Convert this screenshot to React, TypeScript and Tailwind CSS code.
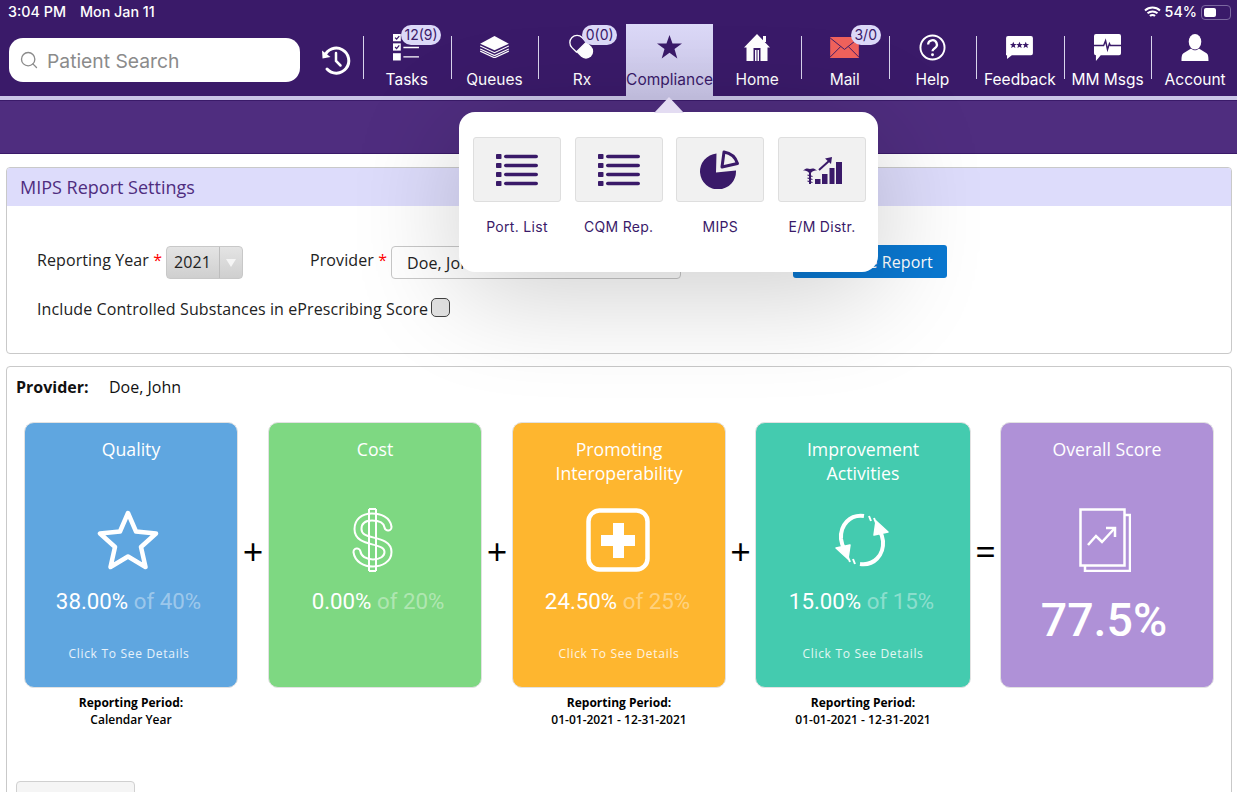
import type { ReactNode } from "react";
import { Search } from "lucide-react";

const PURPLE = "#3a1a69";

function HistoryIcon() {
  return (
    <svg width="32" height="32" viewBox="0 0 32 32" fill="none" stroke="white" strokeWidth="3" strokeLinecap="round">
      <path d="M4.5 12.5A12.5 12.5 0 1 1 7 25" />
      <path d="M2 6.5l0.5 8 8-1.5" fill="white" stroke="none" />
      <path d="M16 9v8l4.5 4.5" strokeWidth="2.5" />
    </svg>
  );
}

function TasksIcon() {
  return (
    <svg width="27" height="27" viewBox="0 0 26 26">
      <rect x="0" y="0" width="7.500" height="7" fill="white" />
      <rect x="0" y="9" width="7.500" height="7" fill="white" />
      <rect x="0" y="18.500" width="7.500" height="7" fill="white" />
      <path d="M2 3.500l1.500 1.500 2.500-3M2 12.500l1.500 1.500 2.500-3" stroke={PURPLE} strokeWidth="1.200" fill="none" />
      <path d="M10 13h15M10 22h15" stroke="white" strokeWidth="1.300" />
    </svg>
  );
}

function QueuesIcon() {
  return (
    <svg width="29" height="22" viewBox="0 0 30 23" fill="none" stroke="white" strokeWidth="1.200">
      <path d="M15 0L30 8 15 15 0 8Z" fill="white" stroke="none" />
      <path d="M0 10.500l15 7 15-7M0 13.500l15 7 15-7M0 15.800l15 7 15-7" />
    </svg>
  );
}

function PillIcon() {
  return (
    <svg width="27" height="28" viewBox="0 0 30 30">
      <g transform="rotate(-45 15 15)">
        <path d="M7 15V8a8 8 0 0 1 16 0v7Z" fill="none" stroke="white" strokeWidth="1.500" />
        <path d="M7 15h16v7a8 8 0 0 1-16 0Z" fill="white" />
      </g>
    </svg>
  );
}

function StarIcon() {
  return (
    <svg width="25" height="24" viewBox="0 0 24 23" fill={PURPLE}>
      <path d="M12 0l2.900 8.200H24l-7.200 5.300 2.700 9-7.500-5.400-7.500 5.400 2.700-9L0 8.200h9.100Z" />
    </svg>
  );
}

function HomeIcon() {
  return (
    <svg width="26" height="27" viewBox="0 0 26 27" fill="white">
      <path d="M13 0L26 13.500h-2.500V27H16.500V14h-7v13H2.500V13.500H0Z" />
      <rect x="19" y="2" width="3" height="6" />
      <path d="M11 16h1.500v11H11zM13.500 16H15v11h-1.500z" />
    </svg>
  );
}

function MailIcon() {
  return (
    <svg width="29" height="21" viewBox="0 0 30 22">
      <rect width="30" height="22" fill="#f0625c" />
      <path d="M0 1l15 12L30 1M0 21l11-11M30 21L19 10" stroke={PURPLE} strokeWidth="1" fill="none" />
    </svg>
  );
}

function HelpIcon() {
  return (
    <svg width="27" height="27" viewBox="0 0 28 28" fill="none" stroke="white">
      <circle cx="14" cy="14" r="12.500" strokeWidth="2" />
      <path d="M9.500 11a4.500 4.500 0 1 1 6.800 3.800c-1.600 1-2.300 1.700-2.300 3.200" strokeWidth="2.400" />
      <circle cx="14" cy="21.500" r="1.500" fill="white" stroke="none" />
    </svg>
  );
}

function FeedbackIcon() {
  return (
    <svg width="27" height="23" viewBox="0 0 28 24">
      <path d="M2 0h24a2 2 0 0 1 2 2v16a2 2 0 0 1-2 2H6l-5 4V20a1 1 0 0 1-1-2V2a2 2 0 0 1 2-2Z" fill="white" />
      <g fill={PURPLE}>
        <path d="M7.500 6l1 2.400h2.500l-2 1.600.7 2.500-2.200-1.400-2.200 1.400.7-2.500-2-1.600H6.500Z" />
        <path d="M14 6l1 2.400h2.500l-2 1.600.7 2.500L14 11.100l-2.200 1.400.7-2.500-2-1.600H13Z" />
        <path d="M20.500 6l1 2.400H24l-2 1.600.7 2.500-2.200-1.400-2.200 1.400.7-2.500-2-1.600h2.500Z" />
      </g>
    </svg>
  );
}

function MsgsIcon() {
  return (
    <svg width="27" height="27" viewBox="0 0 28 28">
      <path d="M2 0h24a2 2 0 0 1 2 2v18a2 2 0 0 1-2 2H7l-5 6v-6a2 2 0 0 1-2-2V2a2 2 0 0 1 2-2Z" fill="white" />
      <path d="M0 12h10l2-5 2 9 2-6 1 2h11" stroke={PURPLE} strokeWidth="1.500" fill="none" />
    </svg>
  );
}

function AccountIcon() {
  return (
    <svg width="28" height="27" viewBox="0 0 28 28" fill="white">
      <ellipse cx="14" cy="8" rx="6.500" ry="8" />
      <path d="M10 15l-8 5c-1.500 1-2 3-2 8h28c0-5-.5-7-2-8l-8-5c-2 2.500-6 2.500-8 0Z" />
    </svg>
  );
}

function ListIcon() {
  return (
    <svg width="42" height="32" viewBox="0 0 42 32" fill={PURPLE}>
      {[0, 9, 18, 27].map((y) => (
        <g key={y}>
          <rect x="0" y={y} width="5.500" height="5" rx="0.800" />
          <rect x="8" y={y + 0.700} width="34" height="3.600" rx="1.800" />
        </g>
      ))}
    </svg>
  );
}

function PieIcon() {
  return (
    <svg width="40" height="39" viewBox="0 0 40 39">
      <path d="M16.500 3.500A18 18 0 1 0 36 20.500L16 22.500Z" fill={PURPLE} />
      <path d="M24 2A17 17 0 0 1 37.500 13.500L22 17Z" fill="none" stroke={PURPLE} strokeWidth="3" strokeLinejoin="round" />
    </svg>
  );
}

function EmIcon() {
  return (
    <svg width="39" height="28" viewBox="0 0 39 28" fill={PURPLE}>
      <rect x="12" y="23" width="5.500" height="5" />
      <rect x="19" y="18" width="5.500" height="10" />
      <rect x="26.500" y="12" width="5" height="16" />
      <rect x="33" y="6" width="6" height="22" />
      <path d="M16 14l10-9" stroke={PURPLE} strokeWidth="2" />
      <path d="M22 2.500L29 1l-1 7Z" />
      <path d="M0 14.500c2.500-2.500 5-2.500 7-1.500 2-1 4.500-1 7 1.500-2.500 0-4.500.5-5.500 2h-3c-1-1.500-3-2-5.500-2Z" />
      <rect x="6" y="14" width="2" height="14" />
      <path d="M4.500 19l5 1.500M4.500 22l5 1.500M4.500 25l5 1.500" stroke={PURPLE} strokeWidth="1.100" />
    </svg>
  );
}

function StarOutline() {
  return (
    <svg width="62" height="60" viewBox="0 0 62 60" fill="none" stroke="white" strokeWidth="4.500" strokeLinejoin="round">
      <path d="M31 3l8 18.500 20 2-15 13.500 4.500 20L31 46.500 13.500 57 18 37 3 23.500l20-2Z" />
    </svg>
  );
}

function DollarIcon() {
  const s = "M36 19C35 12 28 9 20 9C11 9 6 14 6 21C6 29 13 31 21 33C29 35 36 37 36 44C36 51 29 55 21 55C13 55 6 51 5 44";
  return (
    <svg width="42" height="64" viewBox="0 0 42 64" fill="none">
      <path d={s} stroke="white" strokeWidth="9" strokeLinecap="round" />
      <path d={s} stroke="#7ed882" strokeWidth="5" strokeLinecap="round" />
      <path d="M17 1h7M17 63h7M17 1v62M24 1v62" stroke="white" strokeWidth="2" />
    </svg>
  );
}

function PlusBox() {
  return (
    <svg width="64" height="64" viewBox="0 0 64 64" fill="none">
      <rect x="2.500" y="2.500" width="59" height="59" rx="11" stroke="white" strokeWidth="4.500" />
      <path d="M27 15h11v12h11v11H38v12H27V38H15V27h12Z" fill="white" />
    </svg>
  );
}

function CycleIcon() {
  return (
    <svg width="60" height="56" viewBox="0 0 60 56" fill="none" stroke="white" strokeWidth="4">
      <path d="M32 4C18 2 8 13 9 27c.5 5 2 8 4 11" />
      <path d="M28 52c14 2 24-9 23-23-.5-5-2-8-4-11" />
      <path d="M4 36l14-3-2 14ZM56 20l-14 3 2-14Z" fill="white" stroke="white" strokeWidth="1.500" strokeLinejoin="round" />
      <path d="M37 4l2 5M42 6l2 5M23 52l-2-5M18 50l-2-5" strokeWidth="2" />
    </svg>
  );
}

function ReportIcon() {
  return (
    <svg width="52" height="64" viewBox="0 0 52 64" fill="none" stroke="white" strokeWidth="2.500">
      <rect x="1.500" y="1.500" width="44" height="56" />
      <path d="M46 7h5v56H6v-5" />
      <path d="M9 37l8-9 6 6 12-13" />
      <path d="M27 20h9v9" />
    </svg>
  );
}

type NavItem = { label: string; icon: ReactNode; badge?: string; badgeLeft?: string; active?: boolean; divider?: boolean };

const NAV: NavItem[] = [
  { label: "Tasks", icon: <TasksIcon />, badge: "12(9)", badgeLeft: "left-[38px]", divider: true },
  { label: "Queues", icon: <QueuesIcon />, divider: true },
  { label: "Rx", icon: <PillIcon />, badge: "0(0)", badgeLeft: "left-[44px]", divider: true },
  { label: "Compliance", icon: <StarIcon />, active: true },
  { label: "Home", icon: <HomeIcon /> },
  { label: "Mail", icon: <MailIcon />, badge: "3/0", badgeLeft: "left-[50px]", divider: true },
  { label: "Help", icon: <HelpIcon />, divider: true },
  { label: "Feedback", icon: <FeedbackIcon />, divider: true },
  { label: "MM Msgs", icon: <MsgsIcon />, divider: true },
  { label: "Account", icon: <AccountIcon />, divider: true },
];

const REPORTS = [
  { label: "Port. List", icon: <ListIcon /> },
  { label: "CQM Rep.", icon: <ListIcon /> },
  { label: "MIPS", icon: <PieIcon /> },
  { label: "E/M Distr.", icon: <EmIcon /> },
];

type Score = {
  title: string[];
  icon: ReactNode;
  iconClass: string;
  score: string;
  total: string;
  scoreClass: string;
  color: string;
  width: string;
  detailsClass?: string;
  details?: boolean;
  period?: string;
};

const SCORES: Score[] = [
  { title: ["Quality"], icon: <StarOutline />, iconClass: "mr-[7px]", score: "38.00%", total: "of 40%", scoreClass: "mr-[5px]", detailsClass: "mr-[4px]", color: "bg-[#5fa6e0]", width: "w-[214px]", details: true, period: "Calendar Year" },
  { title: ["Cost"], icon: <DollarIcon />, iconClass: "mr-[4px]", score: "0.00%", total: "of 20%", scoreClass: "ml-[6px]", color: "bg-[#7ed882]", width: "w-[214px]" },
  { title: ["Promoting", "Interoperability"], icon: <PlusBox />, iconClass: "mr-[3px]", score: "24.50%", total: "of 25%", scoreClass: "mr-[3px]", color: "bg-[#feb62f]", width: "w-[214px]", details: true, period: "01-01-2021 - 12-31-2021" },
  { title: ["Improvement", "Activities"], icon: <CycleIcon />, iconClass: "mr-[2px]", score: "15.00%", total: "of 15%", scoreClass: "mr-[3px]", color: "bg-[#44cbaf]", width: "w-[216px]", details: true, period: "01-01-2021 - 12-31-2021" },
];

function ScoreCard({ item }: { item: Score }) {
  return (
    <div className={`shrink-0 ${item.width}`}>
      <div className={`relative h-[266px] rounded-[10px] border border-[#e2e2e2] text-white flex flex-col items-center ${item.color}`}>
        <div className="h-[85px] pt-[14px] text-center text-[17.700px] leading-[24px]">
          {item.title.map((t) => (
            <div key={t}>{t}</div>
          ))}
        </div>
        <div className={`h-[64px] flex items-center justify-center ${item.iconClass}`}>{item.icon}</div>
        <div className={`mt-[14px] font-['Roboto',sans-serif] text-[22.300px] leading-[30px] whitespace-nowrap ${item.scoreClass}`}>
          {item.score} <span className="text-white/40">{item.total}</span>
        </div>
        {item.details && (
          <div className={`mt-[29px] text-[12px] leading-[18px] tracking-[0.700px] text-white/85 ${item.detailsClass ?? ""}`}>
            Click To See Details
          </div>
        )}
      </div>
      {item.period && (
        <div className="mt-[6px] text-center text-[12px] leading-[17px] text-black">
          <div className="font-bold">Reporting Period:</div>
          <div className="font-semibold">{item.period}</div>
        </div>
      )}
    </div>
  );
}

function Operator({ sign, width }: { sign: string; width: string }) {
  return (
    <div className={`shrink-0 h-[266px] pb-[6px] flex items-center justify-center text-[36px] text-black ${width}`}>
      {sign}
    </div>
  );
}

export default function App() {
  return (
    <div className="relative w-[1237px] h-[792px] overflow-hidden bg-white font-['Open_Sans',sans-serif]">
      {/* top bar */}
      <div className="bg-[#3a1a69] h-[96px] font-['Inter',sans-serif]">
        <div className="h-[24px] flex items-center justify-between pl-[8px] pr-[6px] text-white text-[14.300px] font-medium">
          <div className="flex gap-[14px]">
            <span>3:04 PM</span>
            <span>Mon Jan 11</span>
          </div>
          <div className="flex items-center gap-[4px]">
            <svg width="17" height="13" viewBox="0 0 17 13" fill="none" stroke="white" strokeWidth="2">
              <path d="M1 4.500a11 11 0 0 1 15 0M3.500 7.300a7.500 7.500 0 0 1 10 0M6 10a3.500 3.500 0 0 1 5 0" />
            </svg>
            <span>54%</span>
            <div className="w-[30px] h-[15px] rounded-[4px] border border-[#7c68a0] p-[2px]">
              <div className="w-[52%] h-full rounded-[2px] bg-white" />
            </div>
          </div>
        </div>
        <div className="flex h-[72px]">
          <div className="pl-[9px] pt-[14px] w-[363px] shrink-0 flex">
            <div className="w-[291px] h-[44px] rounded-[14px] bg-white flex items-center pl-[10px] gap-[8px] text-[#8b8b8b] text-[19.300px]">
              <Search size={20} strokeWidth={1.600} />
              <span className="pt-[3px]">Patient Search</span>
            </div>
            <div className="ml-[20px] mt-[6px]">
              <HistoryIcon />
            </div>
          </div>
          {NAV.map((item) => (
            <div
              key={item.label}
              className={`relative shrink-0 w-[87.600px] h-[72px] flex flex-col items-center text-[15.500px] ${
                item.active ? "bg-gradient-to-b from-[#dcd9f8] to-[#c9c5e6] text-[#3a1a69]" : "text-white"
              }`}
            >
              <div className="h-[46px] flex items-center justify-center">{item.icon}</div>
              <div className="leading-[20px] whitespace-nowrap">{item.label}</div>
              {item.badge && (
                <div className={`absolute top-[1px] h-[20px] px-[3.500px] rounded-full bg-[#dcd9f8] text-[#3a1a69] text-[14px] leading-[20px] ${item.badgeLeft}`}>
                  {item.badge}
                </div>
              )}
              {item.divider && <div className="absolute left-0 top-[12px] h-[43px] w-[1px] bg-[#d8d4ec]" />}
            </div>
          ))}
        </div>
      </div>
      <div className="h-[5px] bg-[#c9c5e6] border-b border-[#3a1a69]" />
      <div className="h-[53px] bg-[#4f2d7f] border-b border-[#3a1a69]" />

      {/* page */}
      <div className="pl-[6px] pt-[13px] pr-[5px]">
        <section className="h-[187px] rounded-[4px] border border-[#c9c9c9] overflow-hidden">
          <h2 className="h-[38px] bg-[#dddcfb] pl-[13px] text-[18px] leading-[38px] text-[#4f2d7f]">MIPS Report Settings</h2>
          <div className="pt-[40px] pl-[30px] text-[16px] tracking-[0.100px] text-[#222]">
            <div className="flex items-start h-[33px]">
              <span className="leading-[29px] w-[129px] whitespace-nowrap">
                Reporting Year <span className="text-[#f00]">*</span>
              </span>
              <div className="w-[77px] h-[33px] rounded-[4px] border border-[#c8c8c8] bg-gradient-to-b from-[#e4e4e4] to-[#cfcfcf] flex items-center">
                <span className="w-[52px] pl-[7px] leading-[33px]">2021</span>
                <div className="h-full flex-1 border-l border-[#bdbdbd] flex items-center justify-center text-[#f5f5f5]">
                  <svg width="10" height="8" viewBox="0 0 10 8" fill="currentColor">
                    <path d="M0 0h10L5 8Z" />
                  </svg>
                </div>
              </div>
              <span className="ml-[67px] w-[81px] leading-[29px] whitespace-nowrap">
                Provider <span className="text-[#f00]">*</span>
              </span>
              <div className="w-[290px] h-[33px] rounded-[4px] border border-[#c8c8c8] pl-[15px] leading-[33px]">
                Doe, John
              </div>
              <button className="ml-[112px] mt-[-1px] w-[154px] h-[33px] rounded-[3px] bg-[#0a78d1] text-white text-[16px]">
                Generate Report
              </button>
            </div>
            <div className="mt-[18px] flex items-center">
              <span>Include Controlled Substances in ePrescribing Score</span>
              <span className="ml-[3px] w-[19px] h-[19px] rounded-[5px] border border-[#444] bg-[#e4e4e4] mt-[-3px]" />
            </div>
          </div>
        </section>

        <section className="relative mt-[12px] h-[500px] rounded-[4px] border border-[#c9c9c9]">
          <div className="pl-[9px] pt-[10px] flex text-[16px] leading-[20px] text-[#111]">
            <span className="w-[93px] font-bold">Provider:</span>
            <span>Doe, John</span>
          </div>
          <div className="mt-[25px] ml-[17px] flex items-start">
            <ScoreCard item={SCORES[0]} />
            <Operator sign="+" width="w-[30px]" />
            <ScoreCard item={SCORES[1]} />
            <Operator sign="+" width="w-[30px]" />
            <ScoreCard item={SCORES[2]} />
            <Operator sign="+" width="w-[29px]" />
            <ScoreCard item={SCORES[3]} />
            <Operator sign="=" width="w-[29px]" />
            <div className="w-[214px] h-[266px] shrink-0 rounded-[10px] border border-[#e2e2e2] bg-[#af91d7] text-white flex flex-col items-center">
              <div className="pt-[14px] h-[85px] text-[17.700px] leading-[24px]">Overall Score</div>
              <div className="mr-[4px]">
                <ReportIcon />
              </div>
              <div className="mt-[20px] mr-[6px] font-['Roboto',sans-serif] font-medium text-[46.500px] leading-[56px]">77.5%</div>
            </div>
          </div>
          <div className="mt-[53px] ml-[9px] w-[119px] h-[40px] rounded-[4px] border border-[#d0d0d0] bg-[#f5f5f5]" />
        </section>
      </div>

      {/* compliance popover */}
      <div className="absolute left-[459px] top-[112px] w-[419px] h-[160px] rounded-[16px] bg-white shadow-[0_20px_110px_rgba(0,0,0,0.2)] pl-[14px] pt-[25px] font-['Inter',sans-serif]">
        <div className="absolute left-[195px] top-[-15px] w-0 h-0 border-x-[15px] border-x-transparent border-b-[16px] border-b-[#e3dcf2]" />
        <div className="flex gap-[13.700px]">
          {REPORTS.map((r) => (
            <div key={r.label} className="w-[88px] flex flex-col items-center">
              <div className="w-[88px] h-[65px] rounded-[3px] border border-[#dedede] bg-[#f1f1f1] flex items-center justify-center">
                {r.icon}
              </div>
              <div className="mt-[16px] text-[14px] leading-[18px] tracking-[0.300px] text-[#3a1a69] whitespace-nowrap">{r.label}</div>
            </div>
          ))}
        </div>
      </div>
    </div>
  );
}
